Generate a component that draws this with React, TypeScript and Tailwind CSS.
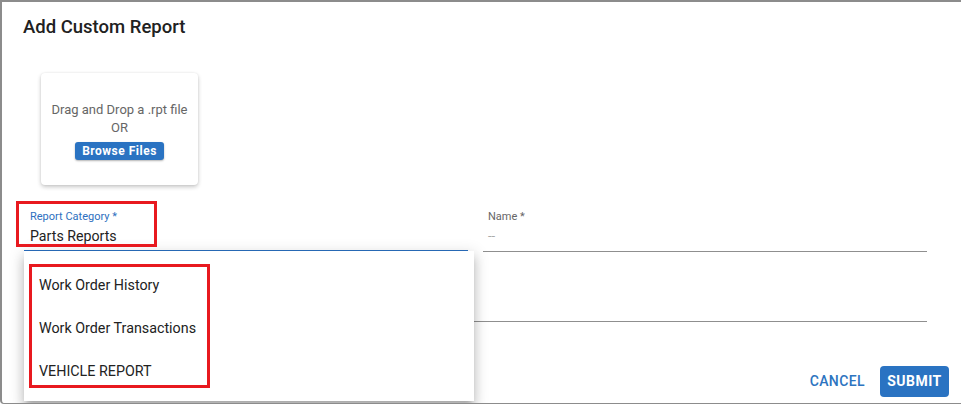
import React from 'react';

const reportOptions = ['Work Order History', 'Work Order Transactions', 'VEHICLE REPORT'];

export default function App() {
  return (
    <div className="w-[961px] h-[406px] bg-white font-[Roboto,sans-serif]">
      {/* Dialog */}
      <div className="relative w-[961px] h-[404px] bg-white border-t-2 border-l-2 border-b border-[#8c8c8c] rounded-bl-[4px] flex flex-col overflow-hidden">
        <h2 className="pt-[13px] pl-[21px] text-[18.5px] leading-[24px] font-medium text-[#212121]">
          Add Custom Report
        </h2>

        {/* Upload card */}
        <div className="mt-[34px] ml-[39px] w-[157px] h-[112px] rounded-[4px] bg-white shadow-[0_2px_4px_rgba(0,0,0,0.22),0_0_2px_rgba(0,0,0,0.08)] flex flex-col items-center pt-[28px]">
          <p className="text-[13px] leading-[18px] text-[#666]">Drag and Drop a .rpt file</p>
          <p className="text-[13px] leading-[18px] text-[#666]">OR</p>
          <button className="mt-[5px] w-[89px] h-[18px] rounded-[3px] bg-[#2a73c2] text-white text-[12px] leading-[18px] font-bold tracking-[0.5px] shadow-[0_1px_2px_rgba(0,0,0,0.3)]">
            Browse Files
          </button>
        </div>

        {/* Fields */}
        <div className="mt-[25px] ml-[22px] mr-[34px] flex gap-[15px]">
          <div className="w-[444px] border-b-2 border-[#2a6fc0] pl-[6px] pb-[3px]">
            <div className="text-[11px] leading-[14px] text-[#2d6fc0]">Report Category *</div>
            <div className="mt-[2px] text-[14.2px] leading-[20px] text-[#222]">Parts Reports</div>
          </div>
          <div className="w-[444px] border-b border-[#8f8f8f] pl-[5px] pb-[5px]">
            <div className="text-[11px] leading-[14px] text-[#666]">Name *</div>
            <div className="mt-[2px] text-[13px] leading-[20px] text-[#aaa]">--</div>
          </div>
        </div>

        <div className="ml-[22px] mr-[34px] h-[70px] border-b border-[#8f8f8f]" />

        {/* Actions */}
        <div className="mt-[44px] mr-[12px] flex justify-end items-center gap-[7px]">
          <button className="px-[8px] h-[31px] text-[14px] font-medium tracking-[0.4px] text-[#2d74c0]">
            CANCEL
          </button>
          <button className="w-[69px] h-[31px] rounded-[4px] bg-[#2a73c2] text-white text-[14px] font-bold tracking-[0.5px]">
            SUBMIT
          </button>
        </div>

        {/* Select menu overlay */}
        <div className="absolute left-[22px] top-[249px] w-[450px] h-[150px] bg-white shadow-[0_5px_5px_-3px_rgba(0,0,0,0.2),0_8px_10px_1px_rgba(0,0,0,0.14),0_3px_14px_2px_rgba(0,0,0,0.12)] pt-[13px]">
          {reportOptions.map((opt) => (
            <div key={opt} className="h-[43px] flex items-center pl-[15px] text-[14.3px] text-[#222]">
              {opt}
            </div>
          ))}
        </div>

        {/* Annotation boxes */}
        <div className="absolute left-[14px] top-[199px] w-[141px] h-[46px] border-[3px] border-[#e8191f]" />
        <div className="absolute left-[27px] top-[262px] w-[181px] h-[124px] border-[3px] border-[#e8191f]" />
      </div>
    </div>
  );
}
